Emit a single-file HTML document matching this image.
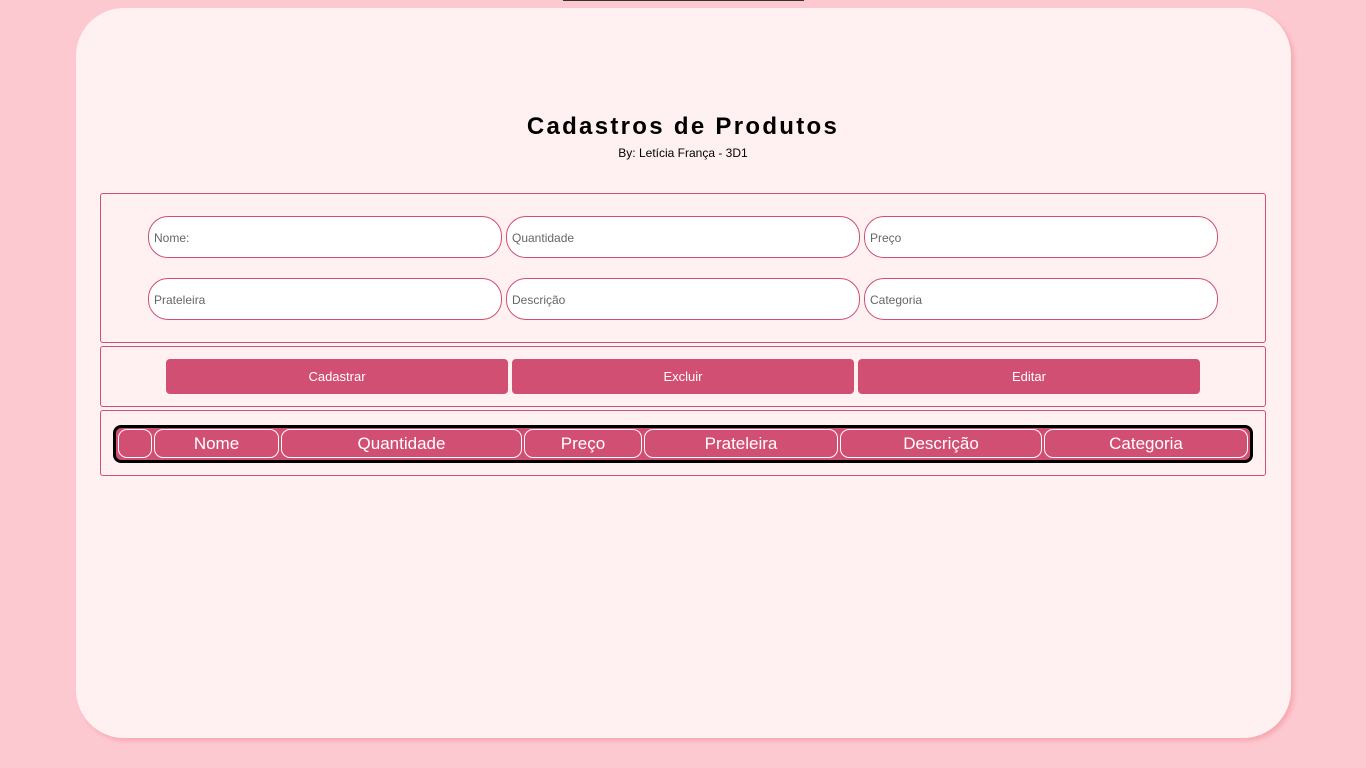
<!DOCTYPE html>
<html><head><meta charset="utf-8"><style>
*{box-sizing:border-box;margin:0;padding:0}
body{width:1366px;height:768px;background:#fdc9d1;font-family:"Liberation Sans",sans-serif;position:relative;overflow:hidden}
.topbar{position:absolute;left:563px;top:0;width:241px;height:1px;background:#333}
.card{position:absolute;left:76px;top:8px;width:1215px;height:730px;background:#fff0f2;border-radius:48px;box-shadow:3px 3px 5px rgba(245,160,170,.8)}
h1{position:absolute;left:0;width:1366px;top:113px;text-align:center;font-size:24px;font-weight:bold;letter-spacing:2.3px;color:#000}
.sub{position:absolute;left:0;width:1366px;top:146px;text-align:center;font-size:12px;color:#000}
.box{position:absolute;left:100px;width:1166px;border:1px solid #d14f72;border-radius:3px}
.inp{position:absolute;width:354px;height:42px;border:1px solid #d14f72;border-radius:20px;background:#fff;font-size:12px;color:#666;padding:14px 0 0 5px}
.btn{position:absolute;top:359px;width:342px;height:35px;background:#d14f72;border-radius:4px;color:#fff;font-size:13px;text-align:center;line-height:35px}
.tbl{position:absolute;left:113px;top:425px;width:1140px;height:38px;border:3px solid #000;border-radius:8px;background:#d14f72}
.th{position:absolute;top:429px;height:29px;border:1px solid #fff;border-radius:9px;color:#fff;font-size:17px;text-align:center;line-height:27px}
</style></head><body>
<div class="topbar"></div>
<div class="card"></div>
<h1>Cadastros de Produtos</h1>
<div class="sub">By: Letícia França - 3D1</div>
<div class="box" style="top:193px;height:150px"></div>
<div class="inp" style="left:148px;top:216px">Nome:</div>
<div class="inp" style="left:506px;top:216px">Quantidade</div>
<div class="inp" style="left:864px;top:216px">Preço</div>
<div class="inp" style="left:148px;top:278px">Prateleira</div>
<div class="inp" style="left:506px;top:278px">Descrição</div>
<div class="inp" style="left:864px;top:278px">Categoria</div>
<div class="box" style="top:346px;height:61px"></div>
<div class="btn" style="left:166px">Cadastrar</div>
<div class="btn" style="left:512px">Excluir</div>
<div class="btn" style="left:858px">Editar</div>
<div class="box" style="top:410px;height:66px"></div>
<div class="tbl"></div>
<div class="th" style="left:118px;width:34px"></div>
<div class="th" style="left:154px;width:125px">Nome</div>
<div class="th" style="left:281px;width:241px">Quantidade</div>
<div class="th" style="left:524px;width:118px">Preço</div>
<div class="th" style="left:644px;width:194px">Prateleira</div>
<div class="th" style="left:840px;width:202px">Descrição</div>
<div class="th" style="left:1044px;width:204px">Categoria</div>
</body></html>
